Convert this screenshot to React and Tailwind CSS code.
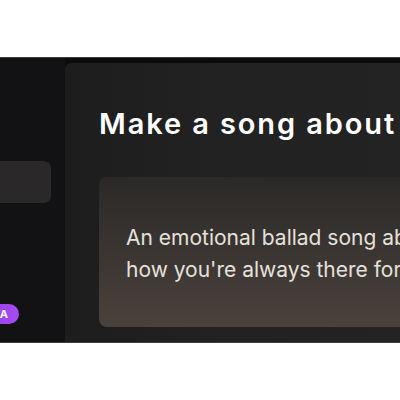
export default function App() {
  return (
    <div className="w-[400px] h-[400px] bg-white overflow-hidden" style={{ fontFamily: "Inter, 'Noto Sans', sans-serif" }}>
      <div className="h-[57px]" />
      <div className="h-[286px] border-t border-b border-[#3d3d3d] bg-[#0b0b0c] flex">
        <aside className="w-[65px] shrink-0 bg-[#121214] flex flex-col">
          <div className="h-[103px]" />
          <div className="ml-[-10px] w-[61px] h-[42px] rounded-[7px] bg-[#2a2829]" />
          <div className="h-[101px]" />
          <div className="ml-[-30px] w-fit h-[20px] rounded-full bg-gradient-to-r from-[#8b35e6] to-[#a64cf2] flex items-center pl-[8px] pr-[10px] text-[11px] font-bold text-white tracking-[0.5px]">
            BETA
          </div>
        </aside>
        <main className="flex-1 mt-[5px] rounded-tl-[6px] bg-gradient-to-r from-[#1d1d1d] via-[#222222] to-[#232323] pl-[34px] pt-[43px] overflow-hidden">
          <h1 className="text-[29px] leading-[35px] font-semibold text-white whitespace-nowrap tracking-[1.9px]">
            Make a song about a friend
          </h1>
          <div className="mt-[36px] h-[150px] w-[400px] rounded-[8px] bg-gradient-to-b from-[#2b2928] to-[#4a423c] pl-[27px] pt-[45px]">
            <p className="text-[21px] leading-[32px] font-normal text-[#e6e1dc] whitespace-nowrap">
              An emotional ballad song about
              <br />
              how you're always there for me
            </p>
          </div>
        </main>
      </div>
    </div>
  );
}
